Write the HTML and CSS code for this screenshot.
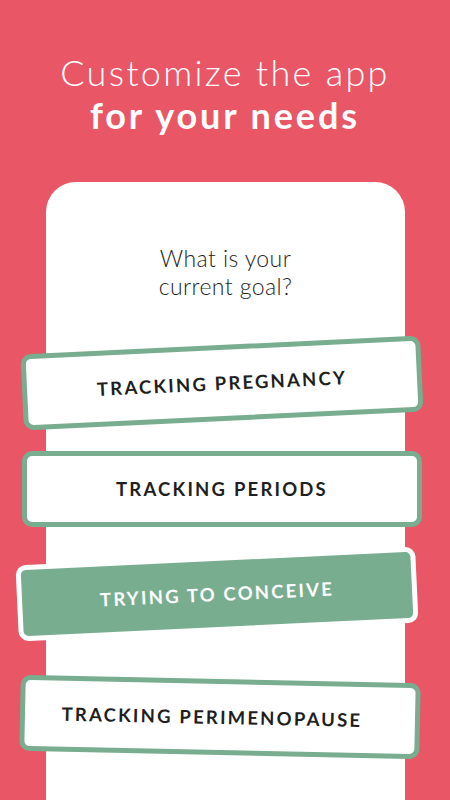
FILE: index.html
```html
<!DOCTYPE html>
<html lang="en">
<head>
<meta charset="utf-8">
<title>Customize the app</title>
<link rel="stylesheet" href="styles.css">
</head>
<body>
<main class="screen">
  <h1 class="title">
    <span class="title-light">Customize the app</span>
    <span class="title-bold">for your needs</span>
  </h1>
  <section class="card">
    <p class="question">What is your<br>current goal?</p>
    <div class="options">
      <button class="option option-1">TRACKING PREGNANCY</button>
      <button class="option option-2">TRACKING PERIODS</button>
      <button class="option option-3 selected">TRYING TO CONCEIVE</button>
      <button class="option option-4">TRACKING PERIMENOPAUSE</button>
    </div>
  </section>
</main>
</body>
</html>
```
FILE: styles.css
```css
html, body {
  margin: 0;
  padding: 0;
}
body {
  width: 450px;
  height: 800px;
  overflow: hidden;
  background: #e95666;
  font-family: Lato, "Open Sans", sans-serif;
}
.screen {
  display: flex;
  flex-direction: column;
  height: 800px;
  padding-top: 51px;
  box-sizing: border-box;
}
.title {
  margin: 0;
  color: #fff;
  text-align: center;
  font-size: 36px;
  line-height: 1.2;
  display: flex;
  flex-direction: column;
}
.title-light {
  font-weight: 300;
  letter-spacing: 2.3px;
}
.title-bold {
  font-weight: 700;
  letter-spacing: 2.9px;
}
.card {
  flex: 1;
  margin: 45px 45px 0 46px;
  background: #fff;
  border-radius: 30px 30px 0 0;
  padding-top: 62px;
}
.question {
  margin: 0;
  text-align: center;
  font-size: 23px;
  line-height: 28px;
  font-weight: 300;
  letter-spacing: 0.4px;
  color: #1e1e1e;
}
.options {
  display: flex;
  flex-direction: column;
  margin: 45px -17px 0 -24px;
}
.option {
  height: 76px;
  box-sizing: border-box;
  border: 5px solid #79ad90;
  border-radius: 10px;
  background: #fff;
  color: #1f1f1f;
  font-family: Lato, "Open Sans", sans-serif;
  font-size: 18.5px;
  font-weight: 700;
  letter-spacing: 2.2px;
  display: flex;
  align-items: center;
  justify-content: center;
  padding: 0;
}
.option-1 {
  transform: rotate(-2.7deg);
}
.option-2 {
  margin-top: 30px;
}
.option-3 {
  margin-top: 29px;
  transform: translateX(-5px) rotate(-2.7deg);
}
.option-4 {
  margin-top: 47px;
  transform: translateX(-2px) rotate(1.2deg);
  padding-right: 16px;
}
.selected {
  background: #79ad90;
  border-color: #fff;
  color: #fff;
}
```
